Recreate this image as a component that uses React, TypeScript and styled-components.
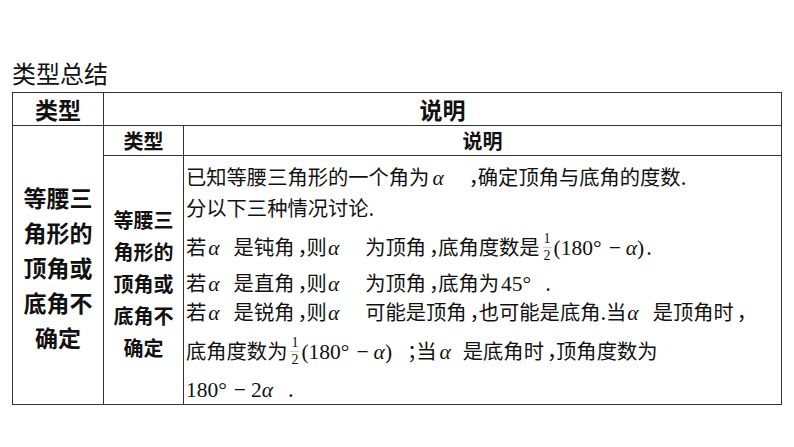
import React from 'react'
import styled, { createGlobalStyle } from 'styled-components'

const GlobalStyle = createGlobalStyle`
  html, body {
    margin: 0;
    padding: 0;
    background: #fff;
  }
  body {
    width: 794px;
    height: 447px;
    overflow: hidden;
    font-family: "Noto Sans CJK SC", "Noto Sans", sans-serif;
    color: #111;
  }
`

const Page = styled.div`
  padding: 61px 0 0 12px;
`

const Title = styled.h2`
  margin: 0 0 7px 0;
  font-size: 24px;
  line-height: 24px;
  font-weight: 400;
`

const Table = styled.div`
  box-sizing: border-box;
  width: 770px;
  height: 313px;
  display: grid;
  grid-template-columns: 91px 1fr;
  grid-template-rows: 33px 1fr;
  border: 1px solid #333;
`

const Inner = styled.div`
  display: grid;
  grid-template-columns: 80px 1fr;
  grid-template-rows: 30px 1fr;
  min-width: 0;
`

const HeadCell = styled.div<{ $size: number; $divider?: boolean }>`
  display: flex;
  align-items: center;
  justify-content: center;
  font-size: ${(p) => p.$size}px;
  font-weight: 700;
  border-bottom: 1px solid #333;
  border-right: ${(p) => (p.$divider ? '1px solid #333' : 'none')};
`

const TypeCell = styled.div<{ $size: number; $lh: number; $top: number }>`
  padding-top: ${(p) => p.$top}px;
  border-right: 1px solid #333;
  text-align: center;
  font-size: ${(p) => p.$size}px;
  line-height: ${(p) => p.$lh}px;
  font-weight: 700;
`

const TypeText = styled.div`
  width: 3em;
  margin: 0 auto;
`

const Body = styled.div`
  padding: 5px 0 0 2px;
  font-size: 20.3px;
  font-feature-settings: "halt" 1;
  min-width: 0;
`

const Line = styled.div<{ $h: number }>`
  height: ${(p) => p.$h}px;
  line-height: ${(p) => p.$h}px;
  white-space: nowrap;
`

// full-width punctuation, set half width with a little air on the left
const P = styled.span`
  padding-left: 3px;
  margin-right: -1px;
`

// math runs (Cambria Math in the source deck)
const M = styled.span<{ $l?: number; $r?: number }>`
  font-family: "Liberation Serif", "DejaVu Serif", serif;
  font-size: 21.5px;
  line-height: 1;
  margin-left: ${(p) => p.$l ?? 0}px;
  margin-right: ${(p) => p.$r ?? 0}px;
`

const Var = styled.i`
  font-style: italic;
`

const Op = styled.span`
  margin: 0 5px 0 7px;
`

const Frac = styled.span`
  display: inline-flex;
  flex-direction: column;
  align-items: center;
  vertical-align: middle;
  font-family: "Liberation Serif", "DejaVu Serif", serif;
  font-size: 14px;
  line-height: 1;
  margin: -4px 2px 0 3px;
`

const Num = styled.span`
  padding: 0 1px 1px;
  border-bottom: 1px solid #ccc;
`

const Den = styled.span`
  padding-top: 1px;
`

const Alpha = ({ l, r }: { l?: number; r?: number }) => (
  <M $l={l} $r={r}>
    <Var>α</Var>
  </M>
)

const Half = () => (
  <Frac>
    <Num>1</Num>
    <Den>2</Den>
  </Frac>
)

const TYPE_TEXT = '等腰三角形的顶角或底角不确定'

export default function App() {
  return (
    <>
      <GlobalStyle />
      <Page>
        <Title>类型总结</Title>
        <Table>
          <HeadCell $size={23} $divider>
            类型
          </HeadCell>
          <HeadCell $size={23}>说明</HeadCell>
          <TypeCell $size={23} $lh={35} $top={54}>
            <TypeText>{TYPE_TEXT}</TypeText>
          </TypeCell>
          <Inner>
            <HeadCell $size={20} $divider>
              类型
            </HeadCell>
            <HeadCell $size={20}>说明</HeadCell>
            <TypeCell $size={20} $lh={32} $top={48}>
              <TypeText>{TYPE_TEXT}</TypeText>
            </TypeCell>
            <Body>
              <Line $h={30}>
                已知等腰三角形的一个角为<Alpha l={3} r={22} />
                <P>，</P>确定顶角与底角的度数.
              </Line>
              <Line $h={32}>分以下三种情况讨论.</Line>
              <Line $h={46}>
                若<Alpha l={2} r={14} />是钝角<P>，</P>则<Alpha l={1} r={26} />为顶角<P>，</P>底角度数是
                <Half />
                <M $r={2}>
                  (180°<Op>−</Op>
                  <Var>α</Var>)
                </M>
                .
              </Line>
              <Line $h={26}>
                若<Alpha l={2} r={14} />是直角<P>，</P>则<Alpha l={1} r={26} />为顶角<P>，</P>底角为
                <M $l={2} $r={14}>
                  45°
                </M>
                .
              </Line>
              <Line $h={32}>
                若<Alpha l={2} r={14} />是锐角<P>，</P>则<Alpha l={1} r={26} />
                可能是顶角<P>，</P>也可能是底角.当<Alpha l={1} r={14} />是顶角时<P>，</P>
              </Line>
              <Line $h={46}>
                底角度数为
                <Half />
                <M $r={12}>
                  (180°<Op>−</Op>
                  <Var>α</Var>)
                </M>
                <P>；</P>当<Alpha l={3} r={12} />是底角时<P>，</P>顶角度数为
              </Line>
              <Line $h={30}>
                <M $r={15}>
                  180°<Op>−</Op>2<Var>α</Var>
                </M>
                .
              </Line>
            </Body>
          </Inner>
        </Table>
      </Page>
    </>
  )
}
